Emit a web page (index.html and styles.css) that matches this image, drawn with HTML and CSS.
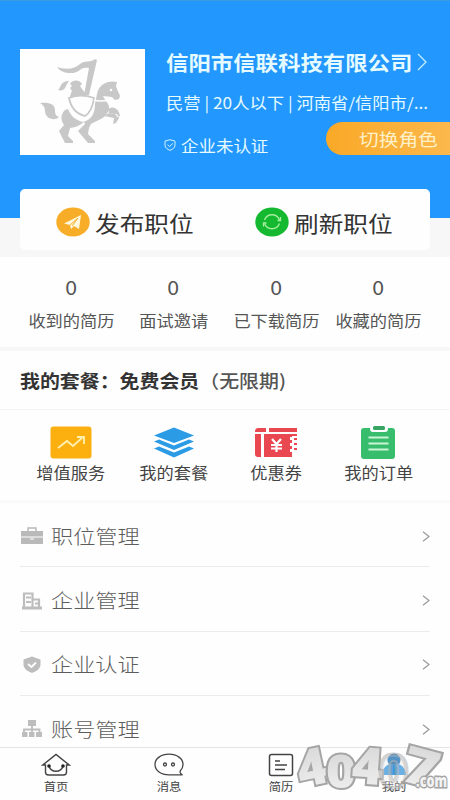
FILE: index.html
```html
<!DOCTYPE html>
<html lang="zh-CN">
<head>
<meta charset="utf-8">
<title>我的</title>
<link rel="stylesheet" href="styles.css">
</head>
<body>
<div class="screen">
  <header class="hero">
    <div class="logo">
      <svg width="125" height="106" viewBox="0 0 125 106" fill="#c8c8c8">
        <path d="M37 18c9 3 18 2 23-3 5-4 10-1 15-5l2 1-8 35h-5l5-27c-9-2-9 5-18 5-7 0-11-2-14-6z"/>
        <path d="M38 41c3-2 2-9 11-9l-2 3c-2 3-2 8-9 6z"/>
        <path d="M50 35c3-5 10-4 12 0l-2 2 2 3 4 5-1 4c-5-2-10-1-15 1 0-4 1-6 2-8l-2-3 2-2z"/>
        <path d="M45 61c-4 4-5 9-1 15l-5 6 6 12h8v-2l-5-5 2-8c8-1 11-4 14-6l1 2-7 7 10 12h7v-2l-7-7 1-6 2-4c7-4 16-6 18-15 1-5-4-8-6-13l9 1 3 3 4-1 1-3c-1-3-3-6-4-10l1-4c-8-2-18 1-20 12l-2 10c0 10-4 16-12 18-8-2-12-6-15-13z"/>
        <path d="M49 49c7-3 17-3 25 0-1 8-3 14-9 18-8-2-14-8-16-18z" fill="#fefefe" stroke="#c8c8c8" stroke-width="1.800"/>
        <path d="M20 54c9-1 15 1 15 7 0 4 1 6 4 7-5 5-14 1-14-6 0-4-2-6-5-8zM84 67l10 2-1 6 3-1 3-5-2-4-8-1zM88 60c6-4 11 0 12 7l-3 1c-1-4-4-4-8-4z"/>
        <path d="M74 51c5 2 11 1 16 0" fill="none" stroke="#fefefe" stroke-width="1.500"/>
        <circle cx="91" cy="41" r="1.300" fill="#fefefe"/>
      </svg>
    </div>
    <div class="company">
      <div class="company-name"><span class="wide">信阳市信联科技有限公司</span>
        <svg class="name-arrow" width="10" height="18" viewBox="0 0 10 18"><path d="M1 1l8 8-8 8"/></svg>
      </div>
      <div class="company-info"><span class="wide">民营 | 20人以下 | 河南省/信阳市/...</span></div>
      <div class="verify">
        <svg width="12" height="12" viewBox="0 0 12 12"><path d="M6 .7l5 1.400v4C11 8.800 8.500 10.500 6 11.300 3.500 10.500 1 8.800 1 6.100v-4zM3.500 5.600l2 2 3.400-3.200"/></svg>
        <span class="wide">企业未认证</span>
      </div>
    </div>
    <div class="switch-role"><span class="wide">切换角色</span></div>
  </header>

  <section class="actions">
    <div class="action">
      <svg width="34" height="30" viewBox="0 0 34 30"><ellipse cx="17" cy="15" rx="16.700" ry="14.400" fill="#f7ad27"/><path d="M8 16.500L25 8l-2 14-5-3-3 3-1-4z" fill="#fff8df"/><path d="M14 18l8-7-6 8" fill="none" stroke="#f7ad27"/></svg>
      <span class="wide">发布职位</span>
    </div>
    <div class="action">
      <svg width="34" height="30" viewBox="0 0 34 30"><ellipse cx="17" cy="15" rx="16.700" ry="14.400" fill="#15b930"/><g fill="none" stroke="#a5ee9e" stroke-width="1.300"><path d="M9.500 13C12 6 22 6 24.500 13M24.500 16.500C22 23.500 12 23.500 9.500 16.500"/><path d="M25.500 10v3.500h-3M8.500 19.500V16h3"/></g></svg>
      <span class="wide">刷新职位</span>
    </div>
  </section>

  <section class="stats">
    <div class="stat"><b class="wide">0</b><span class="wide">收到的简历</span></div>
    <div class="stat"><b class="wide">0</b><span class="wide">面试邀请</span></div>
    <div class="stat"><b class="wide">0</b><span class="wide">已下载简历</span></div>
    <div class="stat"><b class="wide">0</b><span class="wide">收藏的简历</span></div>
  </section>

  <section class="package"><span class="wide">我的套餐：免费会员<em>（无限期)</em></span></section>

  <section class="services">
    <div class="service">
      <svg width="42" height="33" viewBox="0 0 42 33"><rect x=".5" y=".5" width="41" height="32" rx="3" fill="#fbb010"/><path d="M8 22l9-7 6 5 10-9M27 11h7v7" fill="none" stroke="#fff0b0" stroke-width="1.800"/></svg>
      <span class="wide">增值服务</span>
    </div>
    <div class="service">
      <svg width="42" height="33" viewBox="0 0 42 33" fill="#2c9be6"><path d="M21 1.500L41 9.500l-20 7.500L1 9.500z"/><path d="M1 15.500l5-2 15 6 15-6 5 2-20 8.500z"/><path d="M1 22.500l5-2 15 6 15-6 5 2-20 9z"/></svg>
      <span class="wide">我的套餐</span>
    </div>
    <div class="service">
      <svg width="42" height="33" viewBox="0 0 42 33"><g fill="#e94850"><path d="M0 6c0-3 1-4 4-4h7v4zM14 2h28v4H14zM0 8h6v23H3c-2 0-3-1-3-3zM9 8h28v3h-2v3h2v3h-2v3h2v3h-2v3h2v5H9z"/></g><path d="M37 9h5M39 13h3M39 18h3M39 23h3" stroke="#e94850" stroke-width="2"/><path d="M17 13l4.500 5 4.500-5M21.500 18v8M16 19h11M16 22.500h11" fill="none" stroke="#fff" stroke-width="2.200"/></svg>
      <span class="wide">优惠券</span>
    </div>
    <div class="service">
      <svg width="42" height="33" viewBox="0 0 42 33"><path d="M6 2h6c0 3 1 4 3 4h12c2 0 3-1 3-4h4c2 0 3 1 3 3v25c0 2-1 3-3 3H6c-2 0-3-1-3-3V5c0-2 1-3 3-3z" fill="#38bd6c"/><rect x="15" y="0" width="12" height="4" rx="1.500" fill="#38a565"/><path d="M10.500 11.500h20M10.500 17.500h20M10.500 23.500h20" stroke="#c9f5d5" stroke-width="2"/></svg>
      <span class="wide">我的订单</span>
    </div>
  </section>

  <section class="menu">
    <div class="row">
      <svg width="24" height="20" viewBox="0 0 24 20" fill="#b9b9b9"><path d="M8 5V2h8v3" fill="none" stroke="#b9b9b9" stroke-width="1.500"/><path d="M1 5h22v5.500H1zM1 11.500h9v2h4v-2h9V18H1z"/><path d="M10 10h4v3h-4z" fill="#ddd"/></svg>
      <span class="wide">职位管理</span><svg class="arrow" width="8" height="11" viewBox="0 0 8 11"><path d="M1 .7l6 4.800-6 4.800"/></svg>
    </div>
    <div class="row">
      <svg width="24" height="20" viewBox="0 0 24 20"><path d="M4 17V2.500h8.500V17M13 8.500h6V17M6 6.500h5M6 11h5M15 12.500h3" fill="none" stroke="#bdbdbd" stroke-width="2.200"/><path d="M2 15.500h20v3H2z" fill="#bdbdbd"/></svg>
      <span class="wide">企业管理</span><svg class="arrow" width="8" height="11" viewBox="0 0 8 11"><path d="M1 .7l6 4.800-6 4.800"/></svg>
    </div>
    <div class="row">
      <svg width="24" height="20" viewBox="0 0 24 20"><path d="M12 1.500l8.500 3v5c0 4-4 7-8.500 8.500-4.500-1.500-8.500-4.500-8.500-8.500v-5z" fill="#bdbdbd"/><path d="M8 9l3.500 3L16 7.500" fill="none" stroke="#fff" stroke-width="1.800"/></svg>
      <span class="wide">企业认证</span><svg class="arrow" width="8" height="11" viewBox="0 0 8 11"><path d="M1 .7l6 4.800-6 4.800"/></svg>
    </div>
    <div class="row">
      <svg width="24" height="20" viewBox="0 0 24 20" fill="#bdbdbd"><path d="M8 1h8v6H8zM2 13h5.500v5H2zM9 13h5.500v5H9zM16 13h6v5h-6z"/><path d="M12 6v8M4 14v-3.500h15.500V14" fill="none" stroke="#bdbdbd" stroke-width="1.800"/></svg>
      <span class="wide">账号管理</span><svg class="arrow" width="8" height="11" viewBox="0 0 8 11"><path d="M1 .7l6 4.800-6 4.800"/></svg>
    </div>
  </section>

  <nav class="tabs">
    <div class="tab">
      <svg width="30" height="24" viewBox="0 0 30 24"><g fill="none" stroke="#444" stroke-width="1.400"><path d="M4.500 12H1.800L15 1.500 28.200 12h-2.700v7c0 2-1 3-3 3h-15c-2 0-3-1-3-3z"/><path d="M8 13c2 7 12 7 14 0"/></g><circle cx="8" cy="13" r="1.800" fill="#222"/><circle cx="22" cy="13" r="1.800" fill="#222"/></svg>
      <span class="wide">首页</span>
    </div>
    <div class="tab">
      <svg width="30" height="24" viewBox="0 0 30 24" fill="none" stroke="#444" stroke-width="1.300"><path d="M26.500 17.500C28 16 29 14 29 11.500 29 5.500 23 1.200 15 1.200S1 5.500 1 11.500s6 10.300 14 10.300h13.500c-2-1-3-2.500-2-4.300z"/><circle cx="11" cy="11.500" r="1.500"/><circle cx="19" cy="11.500" r="1.500"/></svg>
      <span class="wide">消息</span>
    </div>
    <div class="tab">
      <svg width="30" height="24" viewBox="0 0 30 24" fill="none" stroke="#444" stroke-width="1.500"><rect x="3.500" y="1.500" width="23" height="21" rx="2"/><path d="M9 8h5M9 12h12M9 16.500h10"/></svg>
      <span class="wide">简历</span>
    </div>
    <div class="tab">
      <svg width="30" height="24" viewBox="0 0 30 24"><circle cx="15" cy="7" r="6.500" fill="#1873bd"/><path d="M3 22c0-6 4-10 8-11h8c4 1 8 5 8 11z" fill="#379ae4"/></svg>
      <span class="wide">我的</span>
    </div>
  </nav>

  <svg class="watermark" width="160" height="60" viewBox="0 0 160 60">
    <defs><linearGradient id="silver" x1="0" y1="0" x2="0" y2="1"><stop offset="0" stop-color="#d2d2d2"/><stop offset="1" stop-color="#f3f3f3"/></linearGradient></defs>
    <g class="mark">
      <text transform="translate(11 48) rotate(-12)" textLength="30" lengthAdjust="spacingAndGlyphs">4</text>
      <text class="zero" transform="translate(36 47.500)" textLength="30" lengthAdjust="spacingAndGlyphs">0</text>
      <text transform="translate(61 43) rotate(4)" textLength="31" lengthAdjust="spacingAndGlyphs">4</text>
      <text class="zero clear" transform="translate(89 47.500)" textLength="29" lengthAdjust="spacingAndGlyphs">0</text>
      <text transform="translate(109 40) rotate(15)" textLength="36" lengthAdjust="spacingAndGlyphs">7</text>
      <text class="dotcom" x="126" y="47" textLength="31" lengthAdjust="spacingAndGlyphs">.com</text>
    </g>
  </svg>
</div>
</body>
</html>
```
FILE: styles.css
```css
* { box-sizing: border-box; }
body {
  margin: 0;
  background: #fefefe;
  font-family: "Noto Sans CJK SC", sans-serif;
  color: #333;
}
svg { display: block; flex: none; }
.screen {
  position: relative;
  width: 450px;
  height: 800px;
  overflow: hidden;
  display: flex;
  flex-direction: column;
}
/* Slightly extended letterforms */
.wide {
  display: inline-block;
  white-space: nowrap;
  transform: scaleX(1.12);
}
.hero {
  position: relative;
  flex: none;
  height: 218px;
  padding: 49px 0 0 20px;
  display: flex;
  gap: 21px;
  background: #2297fe;
  border-top: 1px solid #3a9be0;
  color: #e5fbff;
}
.hero .wide { transform-origin: left center; }
.logo { width: 125px; height: 106px; margin-top: -1px; background: #fefefe; }
.company { flex: 1; margin-top: -1px; }
.company-name {
  display: flex;
  align-items: center;
  height: 26px;
  font-size: 20px;
  font-weight: 700;
}
.name-arrow { margin-left: 31px; fill: none; stroke: #c2edff; stroke-width: 1.3; }
.company-info { height: 24px; margin-top: 15px; font-size: 15.5px; line-height: 24px; }
.company-info .wide { transform: scaleX(1.115); }
.verify {
  display: flex;
  align-items: center;
  gap: 5px;
  height: 24px;
  margin: 19px 0 0 -2px;
  font-size: 15.6px;
}
.verify svg { fill: none; stroke: #d5f5ff; stroke-width: 1; }
.switch-role {
  position: absolute;
  right: 0;
  top: 121px;
  width: 124px;
  height: 33px;
  padding-left: 33px;
  border-radius: 17px 0 0 17px;
  background: linear-gradient(90deg, #faa927, #fbb84c);
  color: #fff1c8;
  font-size: 17.6px;
  line-height: 33px;
}
.actions {
  position: relative;
  flex: none;
  display: flex;
  height: 61px;
  margin: -29px 20px 0;
  border-radius: 5px;
  background: #fefefe;
  font-size: 22px;
}
.screen::before {
  content: "";
  position: absolute;
  top: 218px;
  width: 100%;
  height: 39px;
  background: #f7f7f7;
}
.action { display: flex; align-items: center; gap: 5px; width: 199px; padding: 5px 0 0 36px; }
.action .wide { transform-origin: left center; }
.stats {
  flex: none;
  display: grid;
  grid-template-columns: repeat(4, 102.5px);
  justify-content: center;
  height: 97px;
  padding-top: 25px;
  color: #555;
}
.stat { display: flex; flex-direction: column; align-items: center; }
.stat b { font-size: 19px; font-weight: 400; line-height: 24px; }
.stat span { margin-top: 9px; font-size: 15.4px; line-height: 24px; }
.package {
  flex: none;
  height: 63px;
  padding-left: 20px;
  border-top: 4px solid #f7f7f7;
  border-bottom: 1px solid #f4f4f4;
  font-size: 17.8px;
  font-weight: 700;
  line-height: 58px;
}
.package .wide { transform-origin: left center; }
.package em { font-style: normal; font-weight: 500; color: #555; }
.services {
  flex: none;
  display: grid;
  grid-template-columns: repeat(4, 102.5px);
  justify-content: center;
  height: 93px;
  padding-top: 16px;
  border-bottom: 3px solid #f9f9f9;
  color: #444;
}
.service { display: flex; flex-direction: column; align-items: center; font-size: 15.4px; }
.service span { margin-top: 1px; line-height: 24px; }
.menu { flex: 1; min-height: 0; padding: 0 20px; overflow: hidden; }
.row {
  display: flex;
  align-items: center;
  gap: 7px;
  height: 64.4px;
  padding: 3px 0 0;
  border-bottom: 1px solid #ebebeb;
  color: #5c5c5c;
  font-size: 19.8px;
  font-weight: 300;
}
.row .wide { transform-origin: left center; position: relative; top: -1px; }
.arrow { margin-left: auto; fill: none; stroke: #999; stroke-width: 1.2; }
.tabs {
  position: relative;
  flex: none;
  display: grid;
  grid-template-columns: repeat(4, 1fr);
  height: 53px;
  padding-top: 5px;
  border-top: 1px solid #e4e4e4;
  background: #fefefe;
}
.tab { display: flex; flex-direction: column; align-items: center; font-size: 11px; color: #444; }
.tab span { margin-top: 1px; line-height: 16px; }
.watermark { position: absolute; left: 290px; top: 740px; }
.mark {
  font-family: "Open Sans", sans-serif;
  font-weight: 800;
  font-size: 51px;
  fill: url(#silver);
  stroke: #a5a5a5;
  stroke-width: 4px;
  paint-order: stroke;
}
.mark .zero { font-size: 46px; }
.mark .clear { fill-opacity: 0.3; stroke-opacity: 0.5; }
.mark .dotcom { font-size: 17px; fill: #f3f3f3; stroke-width: 3px; }
```
